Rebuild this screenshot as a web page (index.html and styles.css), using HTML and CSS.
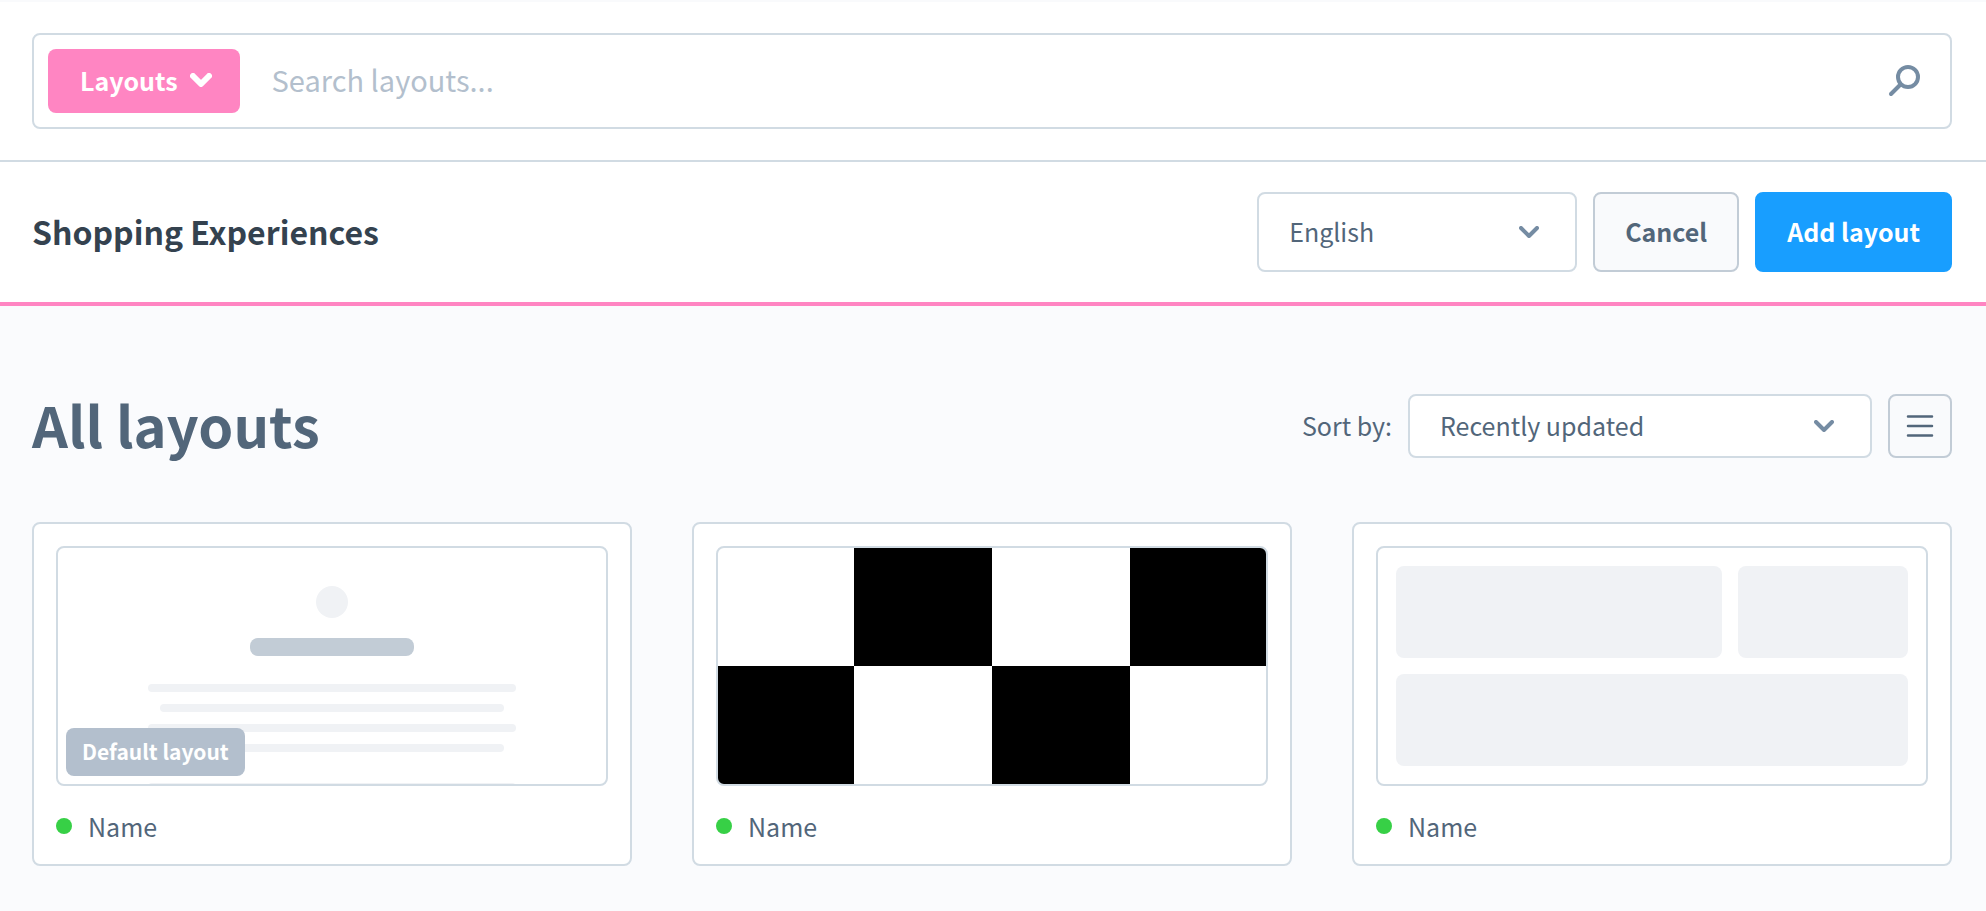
FILE: index.html
```html
<!DOCTYPE html>
<html lang="en">
<head>
    <meta charset="UTF-8">
    <meta name="viewport" content="width=device-width, initial-scale=1.0">
    <title>Shopping Experiences</title>
    <link rel="stylesheet" href="styles.css">
</head>
<body>
    <!-- Search bar -->
    <header class="search-header">
        <form class="search-bar" role="search">
            <button type="button" class="search-type">
                Layouts
                <svg width="22" height="14" viewBox="0 0 22 14" aria-hidden="true">
                    <path d="M3 3l8 8 8-8" fill="none" stroke="currentColor" stroke-width="6" stroke-linecap="round" stroke-linejoin="round"/>
                </svg>
            </button>
            <input type="search" class="search-input" placeholder="Search layouts..." aria-label="Search layouts">
            <button type="submit" class="search-submit" aria-label="Search">
                <svg width="32" height="32" viewBox="0 0 32 32" aria-hidden="true">
                    <circle cx="20" cy="12" r="10" fill="none" stroke="currentColor" stroke-width="4"/>
                    <path d="M12.500 19.500L3 29" fill="none" stroke="currentColor" stroke-width="4" stroke-linecap="round"/>
                </svg>
            </button>
        </form>
    </header>

    <!-- Module toolbar -->
    <div class="toolbar">
        <h2 class="toolbar-title">Shopping Experiences</h2>
        <div class="toolbar-actions">
            <div class="select-box language">
                <select aria-label="Language">
                    <option>English</option>
                </select>
                <svg width="20" height="12" viewBox="0 0 20 12" aria-hidden="true">
                    <path d="M2 2l8 8 8-8" fill="none" stroke="currentColor" stroke-width="4" stroke-linecap="round" stroke-linejoin="round"/>
                </svg>
            </div>
            <button type="button" class="btn">Cancel</button>
            <button type="button" class="btn btn-primary">Add layout</button>
        </div>
    </div>

    <main class="content">
        <div class="list-header">
            <h1>All layouts</h1>
            <div class="list-options">
                <label for="sort-by">Sort by:</label>
                <div class="select-box sorting">
                    <select id="sort-by">
                        <option>Recently updated</option>
                    </select>
                    <svg width="20" height="12" viewBox="0 0 20 12" aria-hidden="true">
                        <path d="M2 2l8 8 8-8" fill="none" stroke="currentColor" stroke-width="4" stroke-linecap="round" stroke-linejoin="round"/>
                    </svg>
                </div>
                <button type="button" class="view-toggle" aria-label="List view">
                    <svg width="28" height="24" viewBox="0 0 28 24" aria-hidden="true">
                        <path d="M2 2.500h24M2 12h24M2 21.500h24" fill="none" stroke="currentColor" stroke-width="2.500" stroke-linecap="round"/>
                    </svg>
                </button>
            </div>
        </div>

        <!-- Layout cards -->
        <div class="cards">
            <article class="card">
                <div class="preview preview-text">
                    <span class="avatar"></span>
                    <span class="headline"></span>
                    <div class="lines">
                        <span class="line"></span>
                        <span class="line short"></span>
                        <span class="line"></span>
                        <span class="line short"></span>
                    </div>
                    <div class="lines">
                        <span class="line"></span>
                    </div>
                    <span class="badge">Default layout</span>
                </div>
                <div class="card-name"><span class="status"></span>Name</div>
            </article>

            <article class="card">
                <div class="preview preview-checker"></div>
                <div class="card-name"><span class="status"></span>Name</div>
            </article>

            <article class="card">
                <div class="preview preview-blocks">
                    <span class="block"></span>
                    <span class="block"></span>
                    <span class="block wide"></span>
                </div>
                <div class="card-name"><span class="status"></span>Name</div>
            </article>
        </div>
    </main>
</body>
</html>
```
FILE: styles.css
```css
/* General Styles */
* {
    box-sizing: border-box;
}

body {
    margin: 0;
    background: #fafbfd;
    color: #52667a;
    font-family: "Noto Sans CJK SC", "Open Sans", sans-serif;
    font-size: 25px;
    line-height: 32px;
}

button,
input,
select {
    font: inherit;
    color: inherit;
}

button {
    cursor: pointer;
}

svg {
    display: block;
    flex: none;
}

/* Search bar */
.search-header {
    padding: 31px 34px 31px 32px;
    background: #fff;
    border-top: 2px solid #f9fafc;
    border-bottom: 2px solid #d1dbe3;
}

.search-bar {
    display: flex;
    align-items: center;
    padding: 14px;
    border: 2px solid #d1dbe3;
    border-radius: 8px;
}

.search-type {
    display: flex;
    align-items: center;
    gap: 12px;
    height: 64px;
    padding: 0 28px 2px 32px;
    border: 0;
    border-radius: 8px;
    background: #ff85c2;
    color: #fff;
    font-weight: 600;
}

.search-input {
    flex: 1;
    min-width: 0;
    height: 64px;
    padding: 0 32px 4px;
    border: 0;
    outline: 0;
    background: none;
    font-size: 29px;
}

.search-input::placeholder {
    color: #b3bfcd;
    opacity: 1;
}

.search-submit {
    padding: 0 16px 0 14px;
    border: 0;
    background: none;
    color: #758ca3;
}

/* Toolbar */
.toolbar {
    display: flex;
    align-items: center;
    justify-content: space-between;
    padding: 30px 34px 30px 32px;
    background: #fff;
    border-bottom: 4px solid #ff85c2;
}

.toolbar-title {
    margin: 0;
    padding-bottom: 2px;
    color: #34424f;
    font-size: 32px;
    font-weight: 600;
}

.toolbar-actions,
.list-options {
    display: flex;
    align-items: center;
    gap: 16px;
}

.list-options label {
    padding-bottom: 2px;
}

.btn {
    height: 80px;
    padding: 0 30px 2px;
    border: 2px solid #c2ccd6;
    border-radius: 8px;
    background: #f9fafc;
    font-weight: 600;
}

.btn-primary {
    border-color: #189eff;
    background: #189eff;
    color: #fff;
}

/* Select with its own arrow */
.select-box {
    display: grid;
    align-items: center;
}

.select-box select,
.select-box svg {
    grid-area: 1 / 1;
}

.select-box select {
    appearance: none;
    width: 100%;
    height: 64px;
    padding: 0 76px 2px 30px;
    border: 2px solid #d1dbe3;
    border-radius: 8px;
    background: #fff;
    line-height: 40px;
}

.select-box svg {
    justify-self: end;
    margin-right: 38px;
    color: #758ca3;
    pointer-events: none;
}

.language {
    width: 320px;
}

.language select {
    height: 80px;
}

.sorting {
    width: 464px;
}

/* List header */
.content {
    padding: 88px 34px 44px 32px;
}

.list-header {
    display: flex;
    align-items: center;
    justify-content: space-between;
    margin-bottom: 64px;
}

.list-header h1 {
    margin: 0;
    padding-bottom: 4px;
    font-size: 56px;
    line-height: 60px;
    font-weight: 600;
}

.view-toggle {
    display: flex;
    align-items: center;
    justify-content: center;
    width: 64px;
    height: 64px;
    padding: 0;
    border: 2px solid #c2ccd6;
    border-radius: 8px;
    background: #f9fafc;
}

/* Cards */
.cards {
    display: grid;
    grid-template-columns: repeat(3, 1fr);
    gap: 60px;
}

.card {
    padding: 22px;
    border: 2px solid #d1dbe3;
    border-radius: 8px;
    background: #fff;
}

.card-name {
    display: flex;
    align-items: center;
    gap: 16px;
    padding-top: 24px;
}

.status {
    width: 16px;
    height: 16px;
    border-radius: 50%;
    background: #37d046;
}

.preview {
    position: relative;
    height: 240px;
    border: 2px solid #d1dbe3;
    border-radius: 8px;
    overflow: hidden;
}

.preview-text {
    display: flex;
    flex-direction: column;
    align-items: center;
    padding-top: 38px;
}

.avatar {
    flex: none;
    width: 32px;
    height: 32px;
    border-radius: 50%;
    background: #f0f2f5;
}

.headline {
    flex: none;
    width: 30%;
    height: 18px;
    margin: 20px 0 28px;
    border-radius: 8px;
    background: #c2ccd6;
}

.lines {
    display: grid;
    gap: 12px;
    width: 67%;
    margin-bottom: 31px;
}

.line {
    height: 8px;
    border-radius: 4px;
    background: #f0f2f5;
}

.line.short {
    margin: 0 12px;
}

.badge {
    position: absolute;
    left: 8px;
    bottom: 8px;
    padding: 7px 16px 9px;
    border-radius: 8px;
    background: #b3bfcd;
    color: #fff;
    font-size: 21px;
    font-weight: 600;
}

.preview-checker {
    background: repeating-conic-gradient(#000 0 25%, #fff 0 50%) border-box 0 0 / 50% 100%;
}

.preview-blocks {
    display: grid;
    grid-template-columns: 326fr 170fr;
    gap: 16px;
    padding: 18px;
}

.block {
    border-radius: 8px;
    background: #f0f2f5;
}

.block.wide {
    grid-column: span 2;
}
```
